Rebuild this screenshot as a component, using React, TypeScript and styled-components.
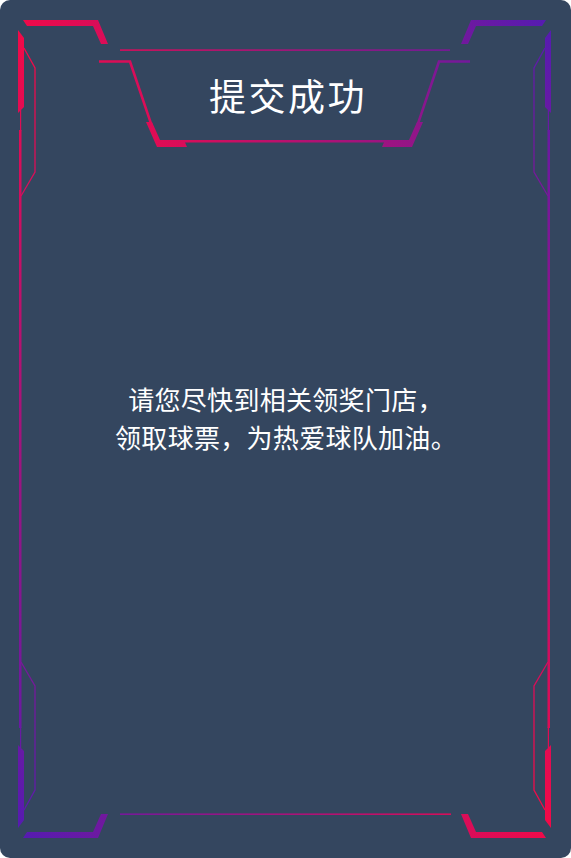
import React from "react";
import styled, { createGlobalStyle } from "styled-components";

const W = 569; // mirror axis * 2
const H = 858;

const GlobalStyle = createGlobalStyle`
  html, body {
    margin: 0;
    padding: 0;
    background: #ffffff;
  }
  body {
    font-family: "Noto Sans CJK SC", "Noto Sans", sans-serif;
  }
`;

const Card = styled.div`
  position: relative;
  width: 571px;
  height: 858px;
  border-radius: 10px;
  background: #34465f;
  overflow: hidden;
  display: flex;
  flex-direction: column;
  align-items: center;
`;

const FrameArt = styled.svg`
  position: absolute;
  inset: 0;
  pointer-events: none;
`;

const Header = styled.header`
  padding-top: 73px;
  display: flex;
  justify-content: center;
`;

const Title = styled.h1`
  margin: 0;
  padding-left: 5px;
  font-size: 37px;
  line-height: 44px;
  font-weight: 400;
  letter-spacing: 2.5px;
  color: #ffffff;
`;

const Message = styled.p`
  margin: 263px 0 0;
  padding-left: 1px;
  font-size: 26px;
  line-height: 38px;
  letter-spacing: 0.3px;
  text-align: center;
  color: #ffffff;
`;

type Pt = [number, number];

// corner pieces drawn for the top-left, mirrored to the other corners
const cornerBars: Pt[][] = [
  [[23, 20], [98, 20], [108, 44], [101, 44], [93, 26], [27, 26]],
  [[18, 30], [24, 38], [24, 107], [18, 113]],
  [[20, 110], [21.2, 110], [21.2, 131], [20, 131]],
];
const cornerLine: Pt[] = [[24, 48], [35, 68], [35, 172], [21, 196]];

const mx = (p: Pt[]): Pt[] => p.map(([x, y]) => [W - x, y]);
const my = (p: Pt[]): Pt[] => p.map(([x, y]) => [x, H - y]);
const pts = (p: Pt[]) => p.map(([x, y]) => `${x},${y}`).join(" ");

const quads = (p: Pt[]) => [p, mx(p), my(p), mx(my(p))];

const titleLeftWedge: Pt[] = [[146, 122], [152, 122], [160, 140], [184, 140], [187, 147], [157, 147]];

const Frame = () => (
  <FrameArt width="571" height="858" viewBox="0 0 571 858">
    <defs>
      <linearGradient
        id="edge"
        gradientUnits="userSpaceOnUse"
        x1="284.5"
        y1="429"
        x2="680.3"
        y2="165.6"
        spreadMethod="reflect"
      >
        <stop offset="0" stopColor="#f20a48" />
        <stop offset="1" stopColor="#4a1db8" />
      </linearGradient>
    </defs>
    <g fill="url(#edge)">
      {cornerBars.flatMap((b, i) =>
        quads(b).map((q, j) => <polygon key={`b${i}-${j}`} points={pts(q)} />)
      )}
      {/* long side rails */}
      <rect x="19" y="130" width="2.5" height="598" />
      <rect x={W - 21.5} y="130" width="2.5" height="598" />
      {/* thin top / bottom rules */}
      <rect x="120" y="49.3" width="330" height="1.6" />
      <rect x="120" y="813.4" width="331" height="1.6" />
      {/* title plate wedges */}
      <polygon points={pts(titleLeftWedge)} />
      <polygon points={pts(mx(titleLeftWedge))} />
    </g>
    <g fill="none" stroke="url(#edge)">
      {quads(cornerLine).map((q, j) => (
        <polyline key={`l${j}`} points={pts(q)} strokeWidth="1.3" />
      ))}
      <polyline
        points={pts([
          [99, 61.5],
          [130, 61.5],
          [157, 141.3],
          [W - 157, 141.3],
          [W - 130, 61.5],
          [W - 99, 61.5],
        ])}
        strokeWidth="2.6"
      />
    </g>
  </FrameArt>
);

export default function App() {
  return (
    <>
      <GlobalStyle />
      <Card>
        <Frame />
        <Header>
          <Title>提交成功</Title>
        </Header>
        <Message>
          请您尽快到相关领奖门店，
          <br />
          领取球票，为热爱球队加油。
        </Message>
      </Card>
    </>
  );
}
